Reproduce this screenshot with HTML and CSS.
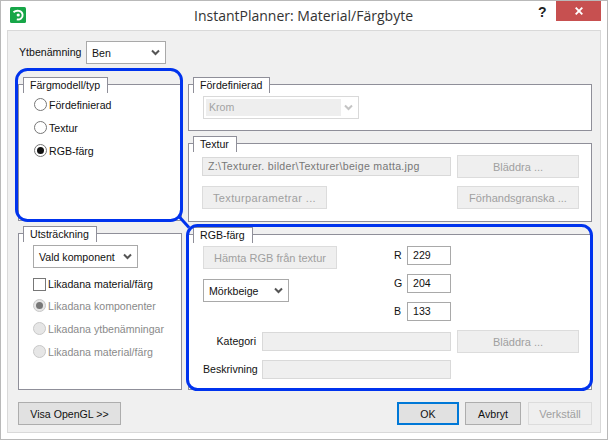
FILE: index.html
```html
<!DOCTYPE html>
<html lang="sv">
<head>
<meta charset="utf-8">
<title>InstantPlanner: Material/Färgbyte</title>
<link rel="stylesheet" href="styles.css">
</head>
<body>
<div class="window">
  <header class="titlebar">
    <svg class="app-icon" width="16" height="16" viewBox="0 0 16 16"><rect width="16" height="16" rx="1.5" fill="#17a648"/><path d="M3.5 5.2C6.5 2.6 12 3.4 12.6 7.6C13 10.8 10 13 6.8 12.4" fill="none" stroke="#fff" stroke-width="1.9"/><circle cx="8.2" cy="8" r="1.6" fill="#fff"/></svg>
    <h1 class="title">InstantPlanner: Material/Färgbyte</h1>
    <span class="help">?</span>
    <span class="close"><svg width="8" height="8" viewBox="0 0 8 8"><path d="M.7 .7L7.3 7.3M7.3 .7L.7 7.3" stroke="#fff" stroke-width="1.9"/></svg></span>
  </header>
  <main class="client">
    <div class="top-row">
      <label class="text">Ytbenämning</label>
      <div class="select w-80"><span>Ben</span><svg class="chev" width="9" height="7" viewBox="0 0 9 7"><path d="M1 1.5L4.5 5L8 1.5" fill="none" stroke="#555" stroke-width="2"/></svg></div>
    </div>
    <div class="columns">
      <div class="col-left">
        <section class="group h-137">
          <div class="legend">Färgmodell/typ</div>
          <div class="radio-list model">
            <label class="opt"><input type="radio" name="m"><span>Fördefinierad</span></label>
            <label class="opt"><input type="radio" name="m"><span>Textur</span></label>
            <label class="opt"><input type="radio" name="m" checked><span>RGB-färg</span></label>
          </div>
        </section>
        <section class="group h-157">
          <div class="legend">Utsträckning</div>
          <div class="extent">
            <div class="select w-105"><span>Vald komponent</span><svg class="chev" width="9" height="7" viewBox="0 0 9 7"><path d="M1 1.5L4.5 5L8 1.5" fill="none" stroke="#555" stroke-width="2"/></svg></div>
            <label class="opt check"><input type="checkbox"><span>Likadana material/färg</span></label>
            <label class="opt off"><input type="radio" name="e" checked disabled><span>Likadana komponenter</span></label>
            <label class="opt off"><input type="radio" name="e" disabled><span>Likadana ytbenämningar</span></label>
            <label class="opt off"><input type="radio" name="e" disabled><span>Likadana material/färg</span></label>
          </div>
        </section>
      </div>
      <div class="col-right">
        <section class="group h-47">
          <div class="legend">Fördefinierad</div>
          <div class="select select-off w-156"><span class="krom">Krom</span><svg class="chev" width="9" height="7" viewBox="0 0 9 7"><path d="M1 1.5L4.5 5L8 1.5" fill="none" stroke="#c4c4c4" stroke-width="2"/></svg></div>
        </section>
        <section class="group h-79">
          <div class="legend">Textur</div>
          <div class="tex-body">
            <div class="row">
              <div class="field field-path">Z:\Texturer. bilder\Texturer\beige matta.jpg</div>
              <button class="btn off w-122" disabled>Bläddra ...</button>
            </div>
            <div class="row row-spread">
              <button class="btn off w-125" disabled>Texturparametrar ...</button>
              <button class="btn off w-122" disabled>Förhandsgranska ...</button>
            </div>
          </div>
        </section>
        <section class="group h-156">
          <div class="legend">RGB-färg</div>
          <div class="rgb-body">
            <div class="rgb-top">
              <div class="rgb-left">
                <button class="btn off w-134" disabled>Hämta RGB från textur</button>
                <div class="select w-86"><span>Mörkbeige</span><svg class="chev" width="9" height="7" viewBox="0 0 9 7"><path d="M1 1.5L4.5 5L8 1.5" fill="none" stroke="#555" stroke-width="2"/></svg></div>
              </div>
              <div class="rgb-values">
                <div class="rgb-row"><span class="rgb-label">R</span><div class="field value">229</div></div>
                <div class="rgb-row"><span class="rgb-label">G</span><div class="field value">204</div></div>
                <div class="rgb-row"><span class="rgb-label">B</span><div class="field value">133</div></div>
              </div>
            </div>
            <div class="rgb-form">
              <span class="form-label">Kategori</span><div class="field field-off"></div><button class="btn off w-122" disabled>Bläddra ...</button>
              <span class="form-label">Beskrivning</span><div class="field field-off"></div>
            </div>
          </div>
        </section>
      </div>
    </div>
    <footer class="bottom">
      <button class="btn w-103">Visa OpenGL &gt;&gt;</button>
      <div class="actions">
        <button class="btn primary">OK</button>
        <button class="btn w-56">Avbryt</button>
        <button class="btn off w-64" disabled>Verkställ</button>
      </div>
    </footer>
  </main>
  <svg class="marks" width="608" height="440" viewBox="0 0 608 440">
    <g fill="none" stroke="#0033ee" stroke-width="3">
      <rect x="16.5" y="69.5" width="165" height="151" rx="11"/>
      <rect x="187.5" y="225.5" width="404" height="164" rx="10"/>
      <path d="M179 216.5L189 227.5"/>
    </g>
  </svg>
</div>
</body>
</html>
```
FILE: styles.css
```css
* { box-sizing: border-box; }
html, body { margin: 0; padding: 0; }
body { width: 608px; height: 440px; overflow: hidden; background: #fff; }
body, button {
  font-family: "Liberation Sans", "Noto Sans", sans-serif;
  font-size: 10.6px;
  color: #111;
}
.window {
  position: relative;
  width: 608px;
  height: 440px;
  background: #fff;
  border: 1px solid #b9b9b9;
  display: flex;
  flex-direction: column;
}
.titlebar { height: 29px; position: relative; display: flex; }
.app-icon { margin: 6px 0 0 9px; }
.title {
  margin: 5px 0 0 168px;
  font-family: "Open Sans", sans-serif;
  font-weight: 400;
  font-size: 14px;
  line-height: 20px;
  color: #333;
  white-space: nowrap;
}
.help {
  position: absolute;
  left: 537px;
  top: 2px;
  font: 700 14px/18px "Liberation Sans", sans-serif;
  color: #222;
}
.close {
  position: absolute;
  left: 555px;
  top: 0;
  width: 45px;
  height: 20px;
  background: #c75050;
  display: flex;
  align-items: center;
  justify-content: center;
}
.client {
  margin: 0 6px 6px;
  height: 403px;
  border: 1px solid #d9d9d9;
  background: #f0f0f0;
  padding: 10px 8px 0 10px;
}
.top-row { display: flex; align-items: center; gap: 7px; height: 23px; }
.text { width: 60px; line-height: 16px; margin-left: 1px; margin-top: -2px; white-space: nowrap; }

.select {
  height: 23px;
  background: #fff;
  border: 1px solid #a9a9a9;
  display: flex;
  align-items: center;
  justify-content: space-between;
  padding: 0 5px 0 5px;
  white-space: nowrap;
}
.chev { flex: none; }
.select-off { background: #fff; border-color: #d9d9d9; padding: 2px 5px 2px 2px; }
.krom {
  flex: none;
  width: 135px;
  height: 17px;
  line-height: 17px;
  background: #eeeeee;
  color: #a3a3a3;
  padding-left: 3px;
}
.w-80 { width: 80px; }
.w-105 { width: 105px; }
.w-156 { width: 156px; margin-left: 14px; margin-top: 3px; }
.w-86 { width: 86px; }

.columns { display: flex; gap: 6px; margin-top: 20px; }
.col-left, .col-right { display: flex; flex-direction: column; }
.col-left { width: 164px; gap: 12px; }
.col-right { width: 404px; gap: 12px; }
.group { background: #fff; border: 1px solid #8f8f99; }
.h-137 { height: 137px; }
.h-157 { height: 157px; }
.h-47 { height: 47px; }
.h-79 { height: 79px; margin-bottom: 0; }
.h-156 { height: 156px; }
.legend {
  width: fit-content;
  height: 16px;
  margin: -8px 0 0 4px;
  padding: 0 7px 0 6px;
  background: #fff;
  border: 1px solid #8f8f99;
  border-bottom: 0;
  line-height: 15px;
  white-space: nowrap;
}

.opt { display: flex; align-items: center; gap: 2px; height: 23px; white-space: nowrap; }
.opt input {
  appearance: none;
  margin: 0;
  width: 13px;
  height: 13px;
  flex: none;
  border: 1px solid #777;
  border-radius: 50%;
  background: #fff;
  display: grid;
  place-items: center;
}
.opt input:checked::after {
  content: "";
  width: 7px;
  height: 7px;
  border-radius: 50%;
  background: #111;
}
.opt input[type="checkbox"] { border-radius: 0; width: 13px; height: 13px; }
.off { color: #8a8a8a; }
.opt.off input { border-color: #c8c8c8; background: #e6e6e6; }
.opt.off input:checked::after { background: #777; }
.radio-list.model { padding: 0 0 0 15px; }
.extent { padding: 3px 0 0 14px; }
.extent .check { margin-top: 6px; height: 20px; }

.btn {
  height: 23px;
  padding: 0;
  background: #e1e1e1;
  border: 1px solid #adadad;
  white-space: nowrap;
}
.btn.off { background: #efefef; border-color: #dcdcdc; color: #a0a0a0; font-size: 11px; }
.w-122 { width: 122px; flex: none; }
.btn.w-125 { width: 125px; letter-spacing: .35px; }
.w-134 { width: 134px; }
.w-103 { width: 103px; }
.w-56 { width: 56px; }
.w-64 { width: 64px; }

.field {
  height: 19px;
  border: 1px solid #d9d9d9;
  background: #efefef;
  line-height: 17px;
  padding-left: 4px;
  white-space: nowrap;
  overflow: hidden;
}
.field-path { width: 249px; color: #777; padding-left: 5px; letter-spacing: .3px; }
.tex-body { padding: 3px 0 0 13px; width: 390px; }
.row { display: flex; justify-content: space-between; align-items: center; }
.row-spread { margin-top: 8px; }

.rgb-body { padding: 3px 0 0 14px; }
.rgb-top { display: flex; height: 82px; }
.rgb-left { width: 191px; display: flex; flex-direction: column; gap: 10px; }
.rgb-values { display: flex; flex-direction: column; gap: 9px; }
.rgb-row { display: flex; align-items: center; gap: 6px; }
.rgb-label { width: 7px; margin-top: -1px; }
.value { width: 44px; background: #fff; border-color: #a9a9a9; color: #111; padding-left: 5px; }
.rgb-form {
  display: grid;
  grid-template-columns: 53px 189px 122px;
  column-gap: 6px;
  row-gap: 7px;
  align-items: center;
  margin-left: 0;
  padding-top: 2px;
}
.form-label { text-align: right; margin-top: -2px; }
.field-off { grid-column: 2; }

.bottom { display: flex; justify-content: space-between; margin-top: 12px; }
.actions { display: flex; gap: 6px; }
.primary { width: 62px; border: 2px solid #0078d7; background: #e1e1e1; }
.actions .off { margin-left: 1px; }

.marks { position: absolute; left: -1px; top: -1px; pointer-events: none; }
```
